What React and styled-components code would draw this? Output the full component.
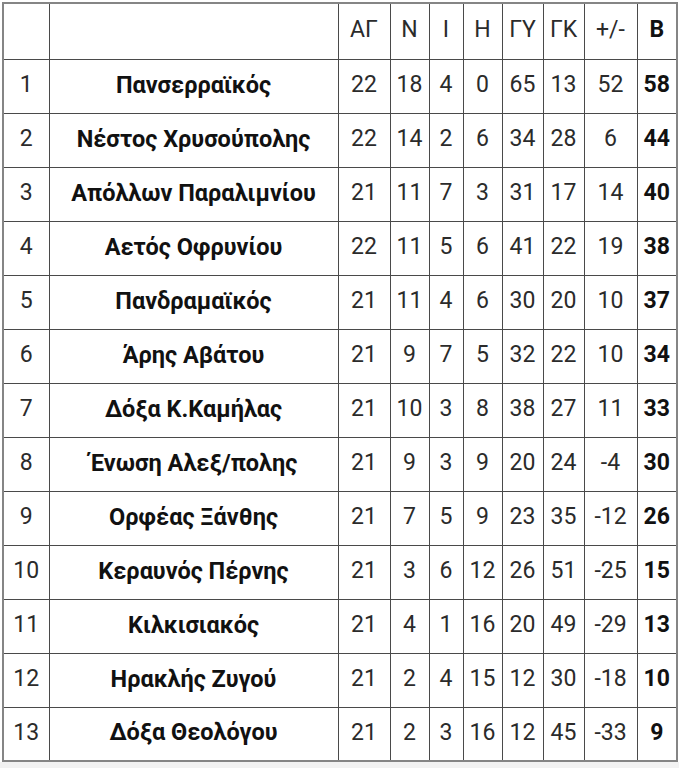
import React from "react";
import styled, { createGlobalStyle } from "styled-components";

const GlobalStyle = createGlobalStyle`
  html, body {
    margin: 0;
    padding: 0;
    background: #f2f2f2;
  }
  body {
    font-family: Roboto, "Noto Sans", Arial, sans-serif;
  }
`;

const columns = [
  { key: "pos", label: "", width: 46 },
  { key: "team", label: "", width: 289 },
  { key: "played", label: "ΑΓ", width: 52 },
  { key: "won", label: "Ν", width: 39 },
  { key: "drawn", label: "Ι", width: 34 },
  { key: "lost", label: "Η", width: 39 },
  { key: "gf", label: "ΓΥ", width: 41 },
  { key: "ga", label: "ΓΚ", width: 41 },
  { key: "diff", label: "+/-", width: 53 },
  { key: "points", label: "Β", width: 40 },
];

const standings = [
  ["Πανσερραϊκός", 22, 18, 4, 0, 65, 13, 52, 58],
  ["Νέστος Χρυσούπολης", 22, 14, 2, 6, 34, 28, 6, 44],
  ["Απόλλων Παραλιμνίου", 21, 11, 7, 3, 31, 17, 14, 40],
  ["Αετός Οφρυνίου", 22, 11, 5, 6, 41, 22, 19, 38],
  ["Πανδραμαϊκός", 21, 11, 4, 6, 30, 20, 10, 37],
  ["Άρης Αβάτου", 21, 9, 7, 5, 32, 22, 10, 34],
  ["Δόξα Κ.Καμήλας", 21, 10, 3, 8, 38, 27, 11, 33],
  ["Ένωση Αλεξ/πολης", 21, 9, 3, 9, 20, 24, -4, 30],
  ["Ορφέας Ξάνθης", 21, 7, 5, 9, 23, 35, -12, 26],
  ["Κεραυνός Πέρνης", 21, 3, 6, 12, 26, 51, -25, 15],
  ["Κιλκισιακός", 21, 4, 1, 16, 20, 49, -29, 13],
  ["Ηρακλής Ζυγού", 21, 2, 4, 15, 12, 30, -18, 10],
  ["Δόξα Θεολόγου", 21, 2, 3, 16, 12, 45, -33, 9],
];

function StandingsTable() {
  return (
    <Page>
      <Table>
        <colgroup>
          {columns.map((c) => (
            <col key={c.key} style={{ width: c.width }} />
          ))}
        </colgroup>
        <thead>
          <HeadRow>
            {columns.map((c) => (
              <Cell key={c.key} $bold={c.key === "points"}>
                {c.label}
              </Cell>
            ))}
          </HeadRow>
        </thead>
        <tbody>
          {standings.map(([team, ...stats], i) => (
            <Row key={team}>
              <Cell>{i + 1}</Cell>
              <TeamCell>{team}</TeamCell>
              {stats.map((value, j) => (
                <Cell key={j} $bold={j === stats.length - 1}>
                  {value}
                </Cell>
              ))}
            </Row>
          ))}
        </tbody>
      </Table>
    </Page>
  );
}

const Page = styled.div`
  background: #ffffff;
  padding: 2px 1px 0 2px;
  width: 676px;
`;

const Table = styled.table`
  width: 676px;
  table-layout: fixed;
  border-collapse: collapse;
  border: 2px solid #858585;
  background: #ffffff;
`;

const HeadRow = styled.tr`
  height: 56px;
`;

const Row = styled.tr`
  height: 54px;
`;

const Cell = styled.td`
  border: 1px solid #4a4a4a;
  padding: 0 0 3px;
  text-align: center;
  vertical-align: middle;
  font-size: 23px;
  font-weight: ${(p) => (p.$bold ? 700 : 400)};
  color: ${(p) => (p.$bold ? "#111" : "#2b2b2b")};
  white-space: nowrap;
`;

const TeamCell = styled(Cell)`
  font-size: 23.5px;
  font-weight: 700;
  color: #111;
`;

export default function App() {
  return (
    <>
      <GlobalStyle />
      <StandingsTable />
    </>
  );
}
